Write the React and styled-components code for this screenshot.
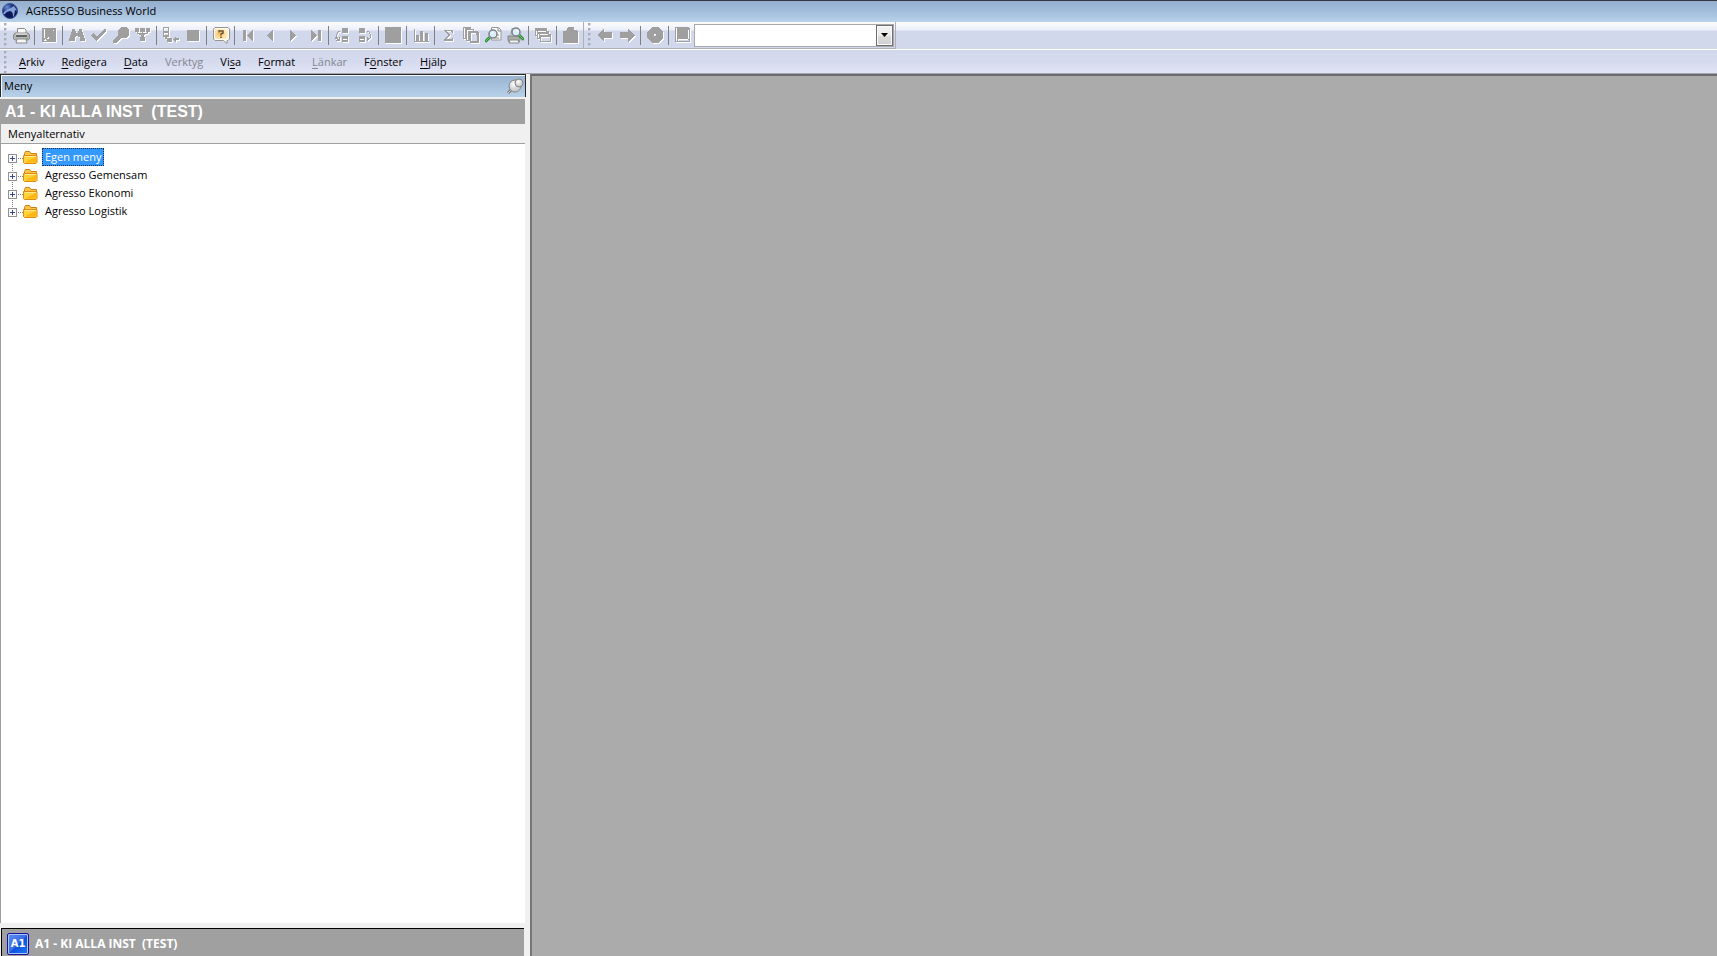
import React from 'react';
import styled, { createGlobalStyle } from 'styled-components';

const GlobalStyle = createGlobalStyle`
  * { box-sizing: border-box; }
  html, body { margin: 0; }
  body {
    font-family: "Open Sans", "Noto Sans", sans-serif;
    font-size: 11px;
    line-height: 18px;
    color: #000;
    background: #f0f0f0;
  }
  button, input { font: inherit; color: inherit; }
`;

const Window = styled.div`
  display: flex;
  flex-direction: column;
  height: 100vh;
  overflow: hidden;
`;

const TitleBar = styled.header`
  display: flex;
  align-items: center;
  gap: 8px;
  height: 22px;
  flex: none;
  padding: 0 0 2px 2px;
  border-top: 1px solid #34383e;
  background: linear-gradient(#94afce, #a3bddb 50%, #b7d2ea);
`;

const WindowTitle = styled.h1`
  margin: 0;
  font-size: 11px;
  font-weight: 400;
`;

const Toolbars = styled.div`
  display: flex;
  height: 28px;
  flex: none;
  border-bottom: 1px solid #fff;
  background: linear-gradient(#fdfdff, #eceff8 8px, #d2d8ec 9px, #d2d8ec);
`;

const ToolGroup = styled.div`
  display: flex;
  align-items: center;
  height: 27px;
  padding-right: 1px;
  border-right: 1px solid #aeb0b6;
  border-bottom: 1px solid #aeb0b6;
`;

const Grip = styled.span`
  width: 3px;
  align-self: stretch;
  margin: 1px 3px 0 4px;
  background: radial-gradient(circle at 1px 1px, #a9acb6 1px, transparent 2px) 0 0 / 3px 5px;
`;

const ToolButton = styled.button`
  display: grid;
  place-items: center;
  width: 22px;
  height: 22px;
  padding: 0;
  border: 0;
  background: none;
`;

const Separator = styled.span`
  width: 1px;
  height: 19px;
  margin: 0 3px 0 2px;
  background: #7f8084;
`;

const ComboBox = styled.div`
  display: flex;
  width: 200px;
  height: 23px;
  border: 1px solid #a9a9ad;
  background: #fff;
`;

const ComboInput = styled.input`
  flex: 1;
  min-width: 0;
  padding: 0 4px;
  border: 0;
  outline: 0;
  background: #fff;
`;

const ComboArrow = styled.button`
  display: grid;
  place-items: center;
  width: 17px;
  padding: 0;
  border: 1px solid #707070;
  background: linear-gradient(#f3f3f3, #ebebeb 50%, #dcdcdc 51%, #cfcfcf);
  box-shadow: inset 0 0 0 1px #fafafa;
`;

const MenuBar = styled.nav`
  display: flex;
  align-items: center;
  gap: 1px;
  height: 24px;
  flex: none;
  border-bottom: 1px solid #a5a8b0;
  background: linear-gradient(#d2d8ec, #d5daee 50%, #e0e4f5);
`;

const MenuButton = styled.button`
  padding: 0 8px;
  border: 0;
  background: none;
  color: ${(p) => (p.disabled ? '#85878f' : '#000')};

  u { text-underline-offset: 2px; }
`;

const Body = styled.div`
  display: flex;
  flex: 1;
  min-height: 0;
`;

const Sidebar = styled.aside`
  display: flex;
  flex-direction: column;
  width: 526px;
  flex: none;
`;

const PaneTitle = styled.div`
  display: flex;
  align-items: center;
  justify-content: space-between;
  height: 23px;
  flex: none;
  padding: 0 1px 0 3px;
  border: 1px solid #26282c;
  border-bottom: 0;
  box-shadow: inset 1px 1px 0 #f4f7fb;
  background: linear-gradient(#97b1cf, #b8d1ea);
`;

const PinButton = styled.button`
  display: grid;
  place-items: center;
  padding: 0;
  border: 0;
  background: none;
`;

const ClientBanner = styled.h2`
  height: 25px;
  flex: none;
  margin: 2px 1px 0 0;
  padding-left: 5px;
  background: #a0a0a0;
  color: #fff;
  font: bold 16px/25px "Liberation Sans", Arial, sans-serif;
  white-space: pre;
`;

const TreeHeader = styled.div`
  height: 20px;
  flex: none;
  margin-right: 1px;
  padding: 1px 0 0 7px;
  border: solid #a0a0a0;
  border-width: 0 0 1px 1px;
  background: #f0f0f0;
`;

const Tree = styled.ul`
  flex: 1;
  min-height: 0;
  margin: 0 1px 0 0;
  padding: 4px 0 0 7px;
  border-left: 1px solid #a0a0a0;
  background: #fff;
  list-style: none;
`;

const TreeRow = styled.li`
  display: flex;
  align-items: center;
  height: 18px;
`;

const Expander = styled.button`
  width: 15px;
  height: 18px;
  padding: 0;
  border: 0;
  background: none;

  svg { display: block; }
`;

const TreeLabel = styled.button`
  height: 18px;
  margin-left: 4px;
  padding: 0 2px;
  border: 1px ${(p) => (p.$selected ? 'dotted #14304e' : 'solid transparent')};
  background: ${(p) => (p.$selected ? '#3399ff' : 'none')};
  color: ${(p) => (p.$selected ? '#fff' : '#000')};
  line-height: 16px;
`;

const ClientTab = styled.footer`
  display: flex;
  align-items: center;
  gap: 6px;
  height: 28px;
  flex: none;
  margin: 5px 2px 0 1px;
  padding: 2px 0 0 5px;
  border: solid #000;
  border-width: 1px 0 0 1px;
  background: #a0a0a0;
  color: #fff;
  font-size: 12px;
  font-weight: 700;
  white-space: pre;
`;

const ClientBadge = styled.span`
  display: grid;
  place-items: center;
  width: 22px;
  height: 22px;
  border: 1px solid #1c10a0;
  border-radius: 2px;
  box-shadow: inset 0 0 0 1px #a9c4f7;
  background: linear-gradient(135deg, #5f8df0, #3a6ce6 50%, #0b4fdc 51%, #1c7cf4);
  font: bold 10px/20px "DejaVu Sans", sans-serif;
`;

const Workspace = styled.main`
  flex: 1;
  margin-left: 4px;
  border: solid #6b6b6b;
  border-width: 2px 0 0 2px;
  border-left-color: #767676;
  background: #ababab;
`;

/* Disabled toolbar glyphs: grey shape with a white one-pixel relief. */
const GLYPHS = {
  save: 'M1 1h14v14H1zM3 2v9h1V2zM4 12v1H3v1h3v-1H5v-1zM12 3v1h1V3zM7 10v1H6v1h2v-2z',
  find: 'M3 2h3v2h1v2h2V4h1V2h3v3h1v3h1v3h1v3h-5v-4H9V9H7v1H6v4H0v-3h1V8h1V5h1z',
  check: 'M0 8l2-2 4 3 7-7h2v2L6 14 4 13z',
  search: 'M8 0h5l3 3v5l-3 3H8L3 16H0v-3l5-5V3z',
  filter: 'M0 1h4v4H0zM5 1h5v4H5zM11 1h4v4h-4zM2 5h1v1h4V5h1v1h4V5h1v2h-3v1H9v2h1v4H5v-4h1V8H4V7H2z',
  branch: 'M0 0h6v10H0zM1 1v3h4V1zM1 6v2h4V6zM2 10h2v1h5v4H4v-3H2zM10 12l3-3v2h3v2h-3v3z',
  stop: 'M2 3h12v11H2z',
  first: 'M2 3h3v11H2zM12 3v11L6 9V8z',
  prev: 'M10 3v11L4 9V8z',
  next: 'M5 3v11l6-5V8z',
  last: 'M4 3v11l6-5V8zM11 3h3v11h-3z',
  moveUp: 'M7 1h6v5H7zM7 9h6v6H7zM8 12v1h4v-1zM3 4h2v1H3zM2 5h1v2H2zM1 7h1v3H1zM2 10h1v1H2zM0 10h2v1h1v1h1v-2h1v4H1v-1h1v-1H0z',
  moveDown: 'M2 1h6v5H2zM2 9h6v6H2zM3 12v1h4v-1zM10 4h2v1h-2zM12 5h1v2h-1zM13 7h1v4h-1zM12 11h1v1h-1zM10 10h1v1h1v2h-1v1h-1z',
  block: 'M0 0h16v16H0z',
  chart: 'M1 2h1v12h14v1H1zM3 8h3v6H3zM7 4h3v10H7zM12 6h3v8h-3z',
  sum: 'M3 3h9v3h-1l-1-2H6l3 4-4 4h5l1-1h1v3H3v-2l4-4-4-4z',
  copy: 'M0 0h8v2h3v2h3l2 2v10H7v-2H3v-2H0zM8 6v8h6V8h-1V6zM4 3v10h1V3zM1 1v10h1V1zM5 3v1h5V3z',
  windows: 'M0 1h12v3h2v3h2v8H5v-3H2V9H0zM1 4v4h1V4zM3 7v4h1V7zM6 10v4h9v-4zM3 4v1h8V4zM5 7v1h8V7z',
  paste: 'M5 0h6v3h2l2 2v11H0V4h2l2-1z',
  back: 'M0 8l7-6v3h8v6H7v4z',
  forward: 'M16 8L9 2v3H1v6h8v4z',
  cancel: 'M5 0h6l5 5v6l-5 5H5l-5-5V5zM7 7v2h2V7z',
  home: 'M0 0h13l2 2v13H0zM1 1v13h1V1zM3 12v1h10v-1zM13 3v9h1V3zM3 14h11v-1H3z',
};

const Glyph = ({ name }) => (
  <svg width="17" height="17" viewBox="0 0 17 17" shapeRendering="crispEdges" fillRule="evenodd" aria-hidden="true">
    <path d={GLYPHS[name]} fill="#fff" transform="translate(1 1)" />
    <path d={GLYPHS[name]} fill="#9f9f9f" />
  </svg>
);

const PrinterIcon = () => (
  <svg width="17" height="17" viewBox="0 0 17 17" aria-hidden="true">
    <path d="M4.500 6V1.500h7L13 3v3" fill="#fafafa" stroke="#8b8b8b" />
    <path d="M2 6h13l1.500 2v4l-1.500 1H2L.5 12V8z" fill="#b5b5b5" stroke="#8a8a8a" />
    <path d="M3 7h11" stroke="#eee" />
    <path d="M3 9h11" stroke="#5f6464" strokeWidth="2" />
    <path d="M13 11.500h2" stroke="#58b868" />
    <path d="M4 12h9l1 4H3z" fill="#f5f5f5" stroke="#8b8b8b" />
  </svg>
);

const HelpIcon = () => (
  <svg width="17" height="17" viewBox="0 0 17 17" aria-hidden="true">
    <defs>
      <radialGradient id="helpFill" cx=".35" cy=".5" r=".7"><stop stopColor="#fdc066" /><stop offset="1" stopColor="#fff6d2" /></radialGradient>
    </defs>
    <path d="M2 .5h13l1.500 1.500v10L15 13.500h-1V16.500L10.500 13.500H2L.5 12V2z" fill="#fff" stroke="#99928c" />
    <path d="M2 2h13v10H2z" fill="url(#helpFill)" />
    <path d="M6 5.500V4h4v2L8 7v1.500M8 9.500V11" fill="none" stroke="#6b5134" strokeWidth="1.500" />
  </svg>
);

const Lens = ({ x, y }) => (
  <g transform={`translate(${x} ${y})`}>
    <path d="M-3 3l-4 4" stroke="#2f8d35" strokeWidth="3" strokeLinecap="round" />
    <path d="M-3 3l-4 4" stroke="#73c673" strokeLinecap="round" />
    <circle r="4" fill="#dceefa" stroke="#7a8288" strokeWidth="1.500" />
    <path d="M-2 0a2 2 0 0 1 2-2" fill="none" stroke="#fff" />
  </g>
);

const PreviewIcon = () => (
  <svg width="17" height="17" viewBox="0 0 17 17" aria-hidden="true">
    <path d="M6.500 .5h7l2.500 2.500v10H6.500z" fill="#fafafa" stroke="#999" />
    <path d="M13 1v3h3M9 11h5M12 8h2" fill="none" stroke="#888" />
    <Lens x={8} y={7} />
  </svg>
);

const PrintPreviewIcon = () => (
  <svg width="17" height="17" viewBox="0 0 17 17" aria-hidden="true">
    <path d="M4 8l1-6.500h6V8" fill="#fafafa" stroke="#999" />
    <path d="M1 9h12v4l-1 2H2l-1-2z" fill="#aaa" stroke="#858585" />
    <path d="M3 13h8l1 3H2z" fill="#f5f5f5" stroke="#8b8b8b" />
    <g transform="translate(17 0) scale(-1 1)"><Lens x={8} y={5} /></g>
  </svg>
);

const AppLogo = () => (
  <svg width="16" height="16" viewBox="0 0 16 16" aria-hidden="true">
    <defs>
      <radialGradient id="globe" cx=".3" cy=".25" r=".9">
        <stop stopColor="#6f8fd2" /><stop offset=".4" stopColor="#1d3182" /><stop offset="1" stopColor="#050a3c" />
      </radialGradient>
    </defs>
    <circle cx="8" cy="8" r="7.500" fill="url(#globe)" stroke="#3a4f91" />
    <path d="M1 11c1-3 4-5 8-6l3-2 2 3 1 2-2-1-1 6-1 1c0-4-1-6-3-6-2 0-4 1-5 3z" fill="#86a3d8" />
    <path d="M3 12c1-3 4-4 6-3 2 1 2 3 1 5H6z" fill="#0c1858" />
  </svg>
);

const PinIcon = () => (
  <svg width="17" height="17" viewBox="0 0 17 17" aria-hidden="true">
    <defs>
      <radialGradient id="pin" cx=".4" cy=".35"><stop stopColor="#fff" /><stop offset="1" stopColor="#cacaca" /></radialGradient>
    </defs>
    <path d="M1 15l4-4" stroke="#777" strokeWidth="3" />
    <path d="M1 15l4-4" stroke="#ddd" />
    <circle cx="8" cy="8" r="6" fill="url(#pin)" stroke="#858585" />
    <circle cx="12" cy="5" r="4" fill="url(#pin)" stroke="#858585" />
  </svg>
);

const FolderIcon = () => (
  <svg width="15" height="13" viewBox="0 0 15 13" aria-hidden="true">
    <path d="M1.500 11V2.500l1-2h4l1.500 2h5.500V11z" fill="#ffc544" stroke="#d07c12" />
    <path d="M.5 4.500h13.500v7l-1 1h-11.500l-1-1z" fill="#ffd338" stroke="#e08a12" />
    <path d="M2 11.500l11-6v6z" fill="#ffb716" />
    <path d="M2 5.500h11" stroke="#ffec96" />
  </svg>
);

const ExpanderIcon = ({ first, last }) => (
  <svg width="15" height="18" viewBox="0 0 15 18" shapeRendering="crispEdges" aria-hidden="true">
    {!first && <path d="M4.500 0v6" stroke="#808080" strokeDasharray="1 1" />}
    {!last && <path d="M4.500 16v2" stroke="#808080" strokeDasharray="1 1" />}
    <path d="M10 10.500h5" stroke="#808080" strokeDasharray="1 1" />
    <path d="M.5 6.500h8v8h-8z" fill="#fafafa" stroke="#919191" />
    <path d="M2 10.500h5M4.500 8v5" stroke="#34489c" />
  </svg>
);

const TOOLS = [
  ['Skriv ut', PrinterIcon], null,
  ['Spara', 'save'], null,
  ['Sök', 'find'], ['Godkänn', 'check'], ['Zooma', 'search'], ['Filter', 'filter'], null,
  ['Gren', 'branch'], ['Stopp', 'stop'], null,
  ['Hjälp', HelpIcon], null,
  ['Första', 'first'], ['Föregående', 'prev'], ['Nästa', 'next'], ['Sista', 'last'], null,
  ['Flytta upp', 'moveUp'], ['Flytta ned', 'moveDown'], null,
  ['Tabell', 'block'], null,
  ['Diagram', 'chart'], null,
  ['Summa', 'sum'], ['Kopiera', 'copy'], ['Förhandsgranska', PreviewIcon], ['Granska utskrift', PrintPreviewIcon], null,
  ['Fönster', 'windows'], null,
  ['Klistra in', 'paste'],
];

const NAV_TOOLS = [
  ['Bakåt', 'back'], ['Framåt', 'forward'], null,
  ['Avbryt', 'cancel'], null,
  ['Hem', 'home'],
];

const MENUS = [
  ['', 'A', 'rkiv'],
  ['', 'R', 'edigera'],
  ['', 'D', 'ata'],
  ['Verkty', 'g', '', true],
  ['Vi', 's', 'a'],
  ['F', 'o', 'rmat'],
  ['', 'L', 'änkar', true],
  ['F', 'ö', 'nster'],
  ['', 'H', 'jälp'],
];

const FOLDERS = ['Egen meny', 'Agresso Gemensam', 'Agresso Ekonomi', 'Agresso Logistik'];

const Tools = ({ items }) =>
  items.map((item, i) => {
    if (!item) return <Separator key={i} />;
    const [label, icon] = item;
    const Drawn = icon;
    return (
      <ToolButton key={i} type="button" aria-label={label}>
        {typeof icon === 'string' ? <Glyph name={icon} /> : <Drawn />}
      </ToolButton>
    );
  });

export default function App() {
  return (
    <Window>
      <GlobalStyle />
      <TitleBar>
        <AppLogo />
        <WindowTitle>AGRESSO Business World</WindowTitle>
      </TitleBar>
      <Toolbars>
        <ToolGroup>
          <Grip />
          <Tools items={TOOLS} />
        </ToolGroup>
        <ToolGroup>
          <Grip />
          <Tools items={NAV_TOOLS} />
          <ComboBox>
            <ComboInput type="text" aria-label="Adress" />
            <ComboArrow type="button" aria-label="Visa lista">
              <svg width="7" height="4" viewBox="0 0 7 4" aria-hidden="true"><path d="M0 0h7L3.500 4z" /></svg>
            </ComboArrow>
          </ComboBox>
        </ToolGroup>
      </Toolbars>
      <MenuBar>
        <Grip />
        {MENUS.map(([before, key, after, disabled]) => (
          <MenuButton key={before + key + after} type="button" disabled={disabled}>
            {before}<u>{key}</u>{after}
          </MenuButton>
        ))}
      </MenuBar>
      <Body>
        <Sidebar>
          <PaneTitle>
            Meny
            <PinButton type="button" aria-label="Fäst"><PinIcon /></PinButton>
          </PaneTitle>
          <ClientBanner>{'A1 - KI ALLA INST  (TEST)'}</ClientBanner>
          <TreeHeader>Menyalternativ</TreeHeader>
          <Tree>
            {FOLDERS.map((name, i) => (
              <TreeRow key={name}>
                <Expander type="button" aria-label={`Expandera ${name}`}>
                  <ExpanderIcon first={i === 0} last={i === FOLDERS.length - 1} />
                </Expander>
                <FolderIcon />
                <TreeLabel type="button" $selected={i === 0}>{name}</TreeLabel>
              </TreeRow>
            ))}
          </Tree>
          <ClientTab>
            <ClientBadge>A1</ClientBadge>
            {'A1 - KI ALLA INST  (TEST)'}
          </ClientTab>
        </Sidebar>
        <Workspace />
      </Body>
    </Window>
  );
}
